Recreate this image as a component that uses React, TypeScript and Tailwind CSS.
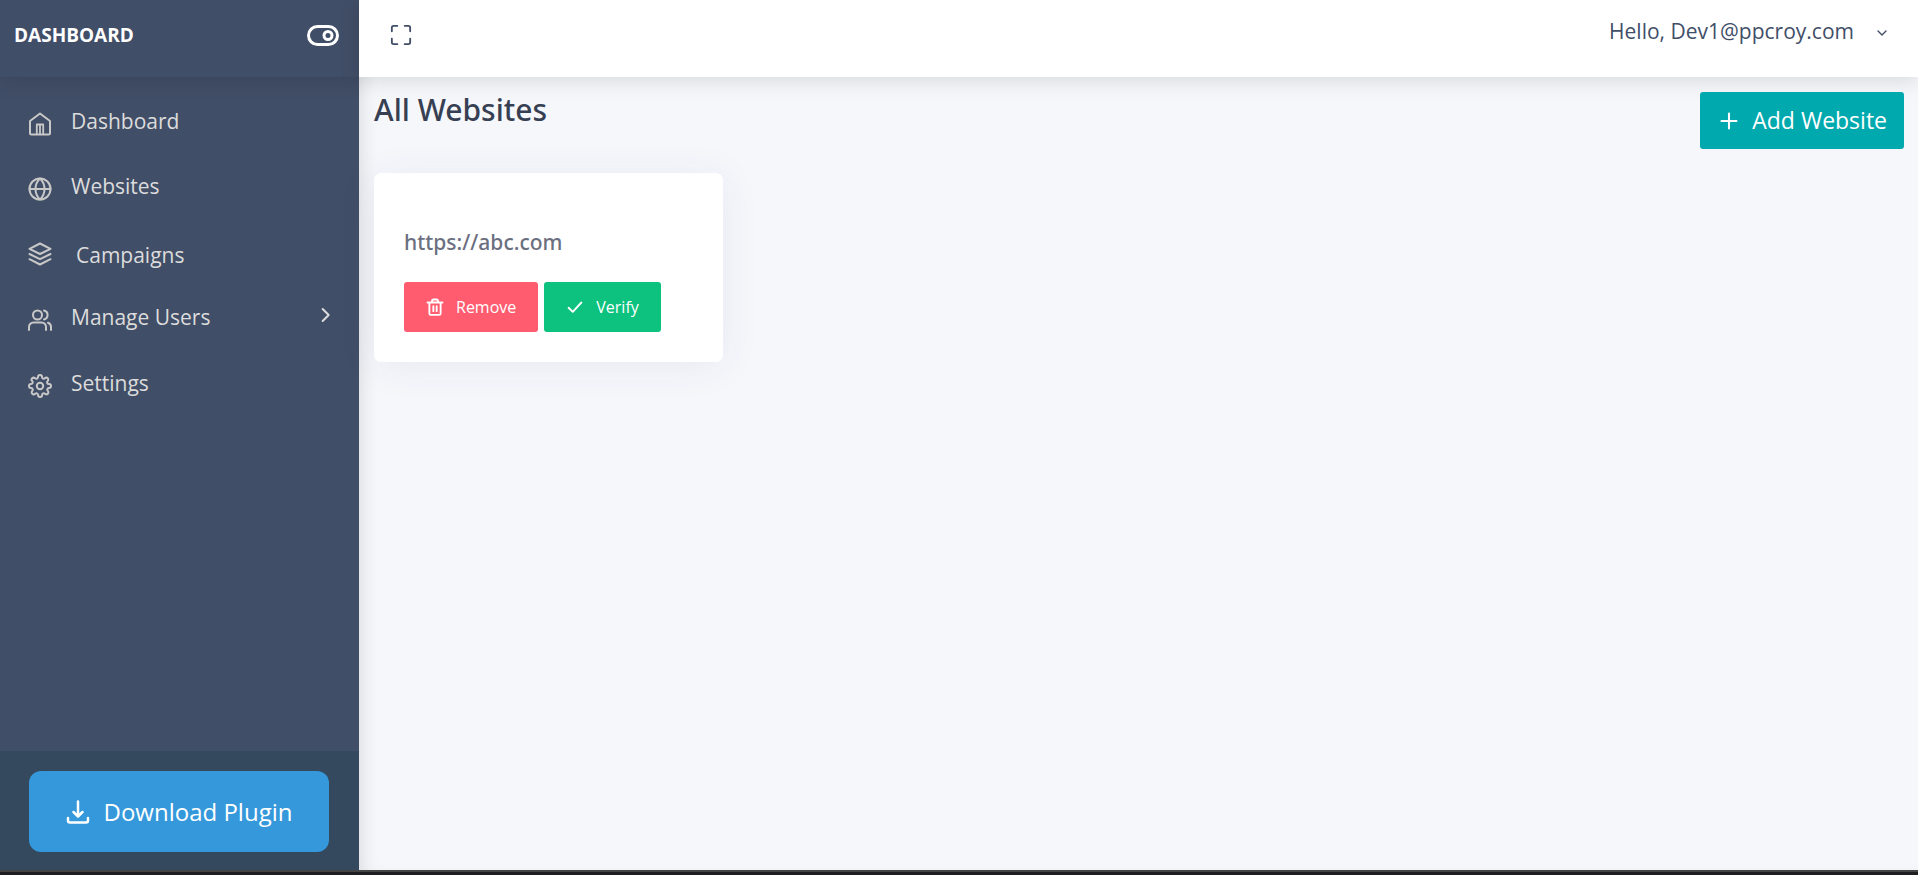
import type { ReactNode } from "react";

const Icon = ({
  className,
  stroke = 2,
  children,
}: {
  className: string;
  stroke?: number;
  children: ReactNode;
}) => (
  <svg
    className={`shrink-0 ${className}`}
    viewBox="0 0 24 24"
    fill="none"
    stroke="currentColor"
    strokeWidth={stroke}
    strokeLinecap="round"
    strokeLinejoin="round"
    aria-hidden="true"
  >
    {children}
  </svg>
);

const navItems = [
  {
    label: "Dashboard",
    row: "h-[65px]",
    text: "",
    icon: (
      <>
        <path d="M2 9 12 1.500 22 9v12a1.500 1.500 0 0 1-1.500 1.500h-17A1.500 1.500 0 0 1 2 21z" />
        <path d="M8.800 22V12.500h6.400V22M12 13v9" strokeWidth="1.800" />
      </>
    ),
  },
  {
    label: "Websites",
    row: "h-[65px]",
    text: "",
    icon: (
      <>
        <circle cx="12" cy="12" r="10.500" />
        <path d="M1.500 12h21M12 1.500c3.200 3 4.500 6.800 4.500 10.500s-1.300 7.500-4.500 10.500c-3.200-3-4.500-6.800-4.500-10.500S8.800 4.500 12 1.500z" />
      </>
    ),
  },
  {
    label: "Campaigns",
    row: "h-[66px]",
    text: "pl-[5px] pt-[8px]",
    icon: (
      <>
        <path d="M12 1.500 1.500 6.800 12 12l10.500-5.200z" />
        <path d="m1.500 17.200 10.500 5.300 10.500-5.300M1.500 12 12 17.200 22.500 12" />
      </>
    ),
  },
  {
    label: "Manage Users",
    row: "h-[66px]",
    text: "",
    hasChildren: true,
    icon: (
      <>
        <circle cx="9.500" cy="7" r="4.500" />
        <path d="M1 22v-3a4.500 4.500 0 0 1 4.500-4.500h8A4.500 4.500 0 0 1 18 19v3M16 2.600a4.500 4.500 0 0 1 0 8.800M23 22v-3a4.500 4.500 0 0 0-3-4.300" />
      </>
    ),
  },
  {
    label: "Settings",
    row: "h-[65px]",
    text: "",
    icon: (
      <>
        <circle cx="12" cy="12" r="3.200" />
        <path d="M19.400 15a1.650 1.650 0 0 0 .33 1.820l.06.06a2 2 0 1 1-2.830 2.830l-.06-.06a1.650 1.650 0 0 0-2.800 1.170V21a2 2 0 0 1-4 0v-.09A1.650 1.650 0 0 0 9 19.400a1.650 1.650 0 0 0-1.820.33l-.06.06a2 2 0 1 1-2.830-2.830l.06-.06a1.650 1.650 0 0 0-1.170-2.800H3a2 2 0 0 1 0-4h.09A1.650 1.650 0 0 0 4.600 9a1.650 1.650 0 0 0-.33-1.820l-.06-.06a2 2 0 1 1 2.830-2.830l.06.06A1.650 1.650 0 0 0 9 4.600 1.650 1.650 0 0 0 10 3.090V3a2 2 0 0 1 4 0v.09a1.650 1.650 0 0 0 2.820 1.170l.06-.06a2 2 0 1 1 2.830 2.830l-.06.06A1.650 1.650 0 0 0 20.910 10H21a2 2 0 0 1 0 4h-.09a1.650 1.650 0 0 0-1.510 1z" />
      </>
    ),
  },
];

const Sidebar = () => (
  <aside className="flex w-[359px] shrink-0 flex-col bg-[#414e67]">
    <div className="flex h-[77px] shrink-0 items-start justify-between pt-[20px] pr-[20px] pl-[14px] text-white shadow-[0_4px_20px_rgba(0,0,0,0.12)]">
      <span className="text-[19px] leading-[30px] font-bold">DASHBOARD</span>
      <button type="button" aria-label="Toggle sidebar" className="flex h-[30px] items-center">
        <svg className="h-[21px] w-[32px]" viewBox="0 0 32 21" fill="none" stroke="currentColor" strokeWidth="3" aria-hidden="true">
          <rect x="1.500" y="1.500" width="29" height="18" rx="9" />
          <circle cx="21" cy="10.500" r="4" />
        </svg>
      </button>
    </div>
    <nav className="flex flex-1 flex-col pt-[11px] text-[#dcdcdc]">
      {navItems.map((item) => (
        <a key={item.label} href="#" className={`flex items-center pr-[25px] pl-[28px] ${item.row}`}>
          <span className="flex pt-[6px] text-[#c8c8c8]">
            <Icon className="size-[24px]">{item.icon}</Icon>
          </span>
          <span className={`ml-[19px] flex-1 text-[21px] leading-[32px] ${item.text}`}>{item.label}</span>
          {item.hasChildren && (
            <Icon className="mb-1 size-[16px]" stroke={3}>
              <path d="m7 3 9 9-9 9" />
            </Icon>
          )}
        </a>
      ))}
    </nav>
    <div className="bg-[#34495e] pt-[20px] pr-[30px] pb-[18px] pl-[29px]">
      <button
        type="button"
        className="flex h-[81px] w-full items-center justify-center gap-[14px] rounded-[12px] bg-[#3498db] text-[24px] text-white"
      >
        <Icon className="size-[24px]" stroke={2.5}>
          <path d="M12 1.500V16M7.500 12l4.500 4.500 4.500-4.500M2 18v2.500A2 2 0 0 0 4 22.500h16a2 2 0 0 0 2-2V18" />
        </Icon>
        Download Plugin
      </button>
    </div>
  </aside>
);

const WebsiteCard = ({ url }: { url: string }) => (
  <section className="w-[349px] rounded-[7px] bg-white px-[30px] pt-[53px] pb-[30px] shadow-[0_4px_40px_0_rgba(62,57,107,0.07)]">
    <h2 className="font-['Noto_Sans',sans-serif] text-[21px] leading-[32px] font-medium text-[#6b6f80]">{url}</h2>
    <div className="mt-[24px] flex gap-[6px] text-[16px] text-white">
      <button type="button" className="flex h-[50px] items-center gap-[12px] rounded-[3px] bg-[#ff5c70] px-[22px]">
        <Icon className="size-[18px]" stroke={2.5}>
          <path d="M2 6h20M4.500 6v14.500a2 2 0 0 0 2 2h11a2 2 0 0 0 2-2V6M8 6V4a2 2 0 0 1 2-2h4a2 2 0 0 1 2 2v2M9.800 11v6.500M14.200 11v6.500" />
        </Icon>
        Remove
      </button>
      <button type="button" className="flex h-[50px] items-center gap-[12px] rounded-[3px] bg-[#0cc27e] px-[22px]">
        <Icon className="size-[18px]" stroke={2.5}>
          <path d="m3.500 13 5.500 5.500L20.500 6" />
        </Icon>
        Verify
      </button>
    </div>
  </section>
);

const App = () => {
  return (
    <div className="flex min-h-screen flex-col font-['Open_Sans',sans-serif]">
      <div className="flex flex-1 bg-[#f5f7fb]">
        <Sidebar />
        <div className="flex min-w-0 flex-1 flex-col shadow-[inset_12px_0_18px_-10px_rgba(0,0,0,0.12)]">
          <header className="flex h-[77px] items-start justify-between bg-white pt-[15px] pr-[28px] pl-[31px] text-[#414e67] shadow-[0_4px_20px_rgba(0,0,0,0.12)]">
            <button type="button" aria-label="Full screen" className="flex h-[40px] items-center">
              <Icon className="size-[22px]">
                <path d="M8 2H4a2 2 0 0 0-2 2v4M16 2h4a2 2 0 0 1 2 2v4M8 22H4a2 2 0 0 1-2-2v-4M16 22h4a2 2 0 0 0 2-2v-4" />
              </Icon>
            </button>
            <button type="button" className="flex items-center gap-[20px] text-[21px] leading-[32px]">
              Hello, Dev1@ppcroy.com
              <Icon className="mt-1 size-[16px]">
                <path d="m6 9 6 6 6-6" />
              </Icon>
            </button>
          </header>
          <main className="flex flex-col pt-[15px] pr-[14px] pl-[15px]">
            <div className="flex h-[81px] items-start justify-between">
              <h1 className="font-['Noto_Sans',sans-serif] text-[30px] leading-[36px] font-medium text-[#373f52]">
                All Websites
              </h1>
              <button
                type="button"
                className="flex h-[57px] items-center gap-[13px] rounded-[3px] bg-[#00a9ae] pr-[17px] pl-[19px] text-[23px] text-white"
              >
                <Icon className="size-[20px]" stroke={2.5}>
                  <path d="M12 3v18M3 12h18" />
                </Icon>
                Add Website
              </button>
            </div>
            <WebsiteCard url="https://abc.com" />
          </main>
        </div>
      </div>
      <div className="h-[5px] border-t-2 border-[#444] bg-[#1e1e20]" />
    </div>
  );
};

export default App;
